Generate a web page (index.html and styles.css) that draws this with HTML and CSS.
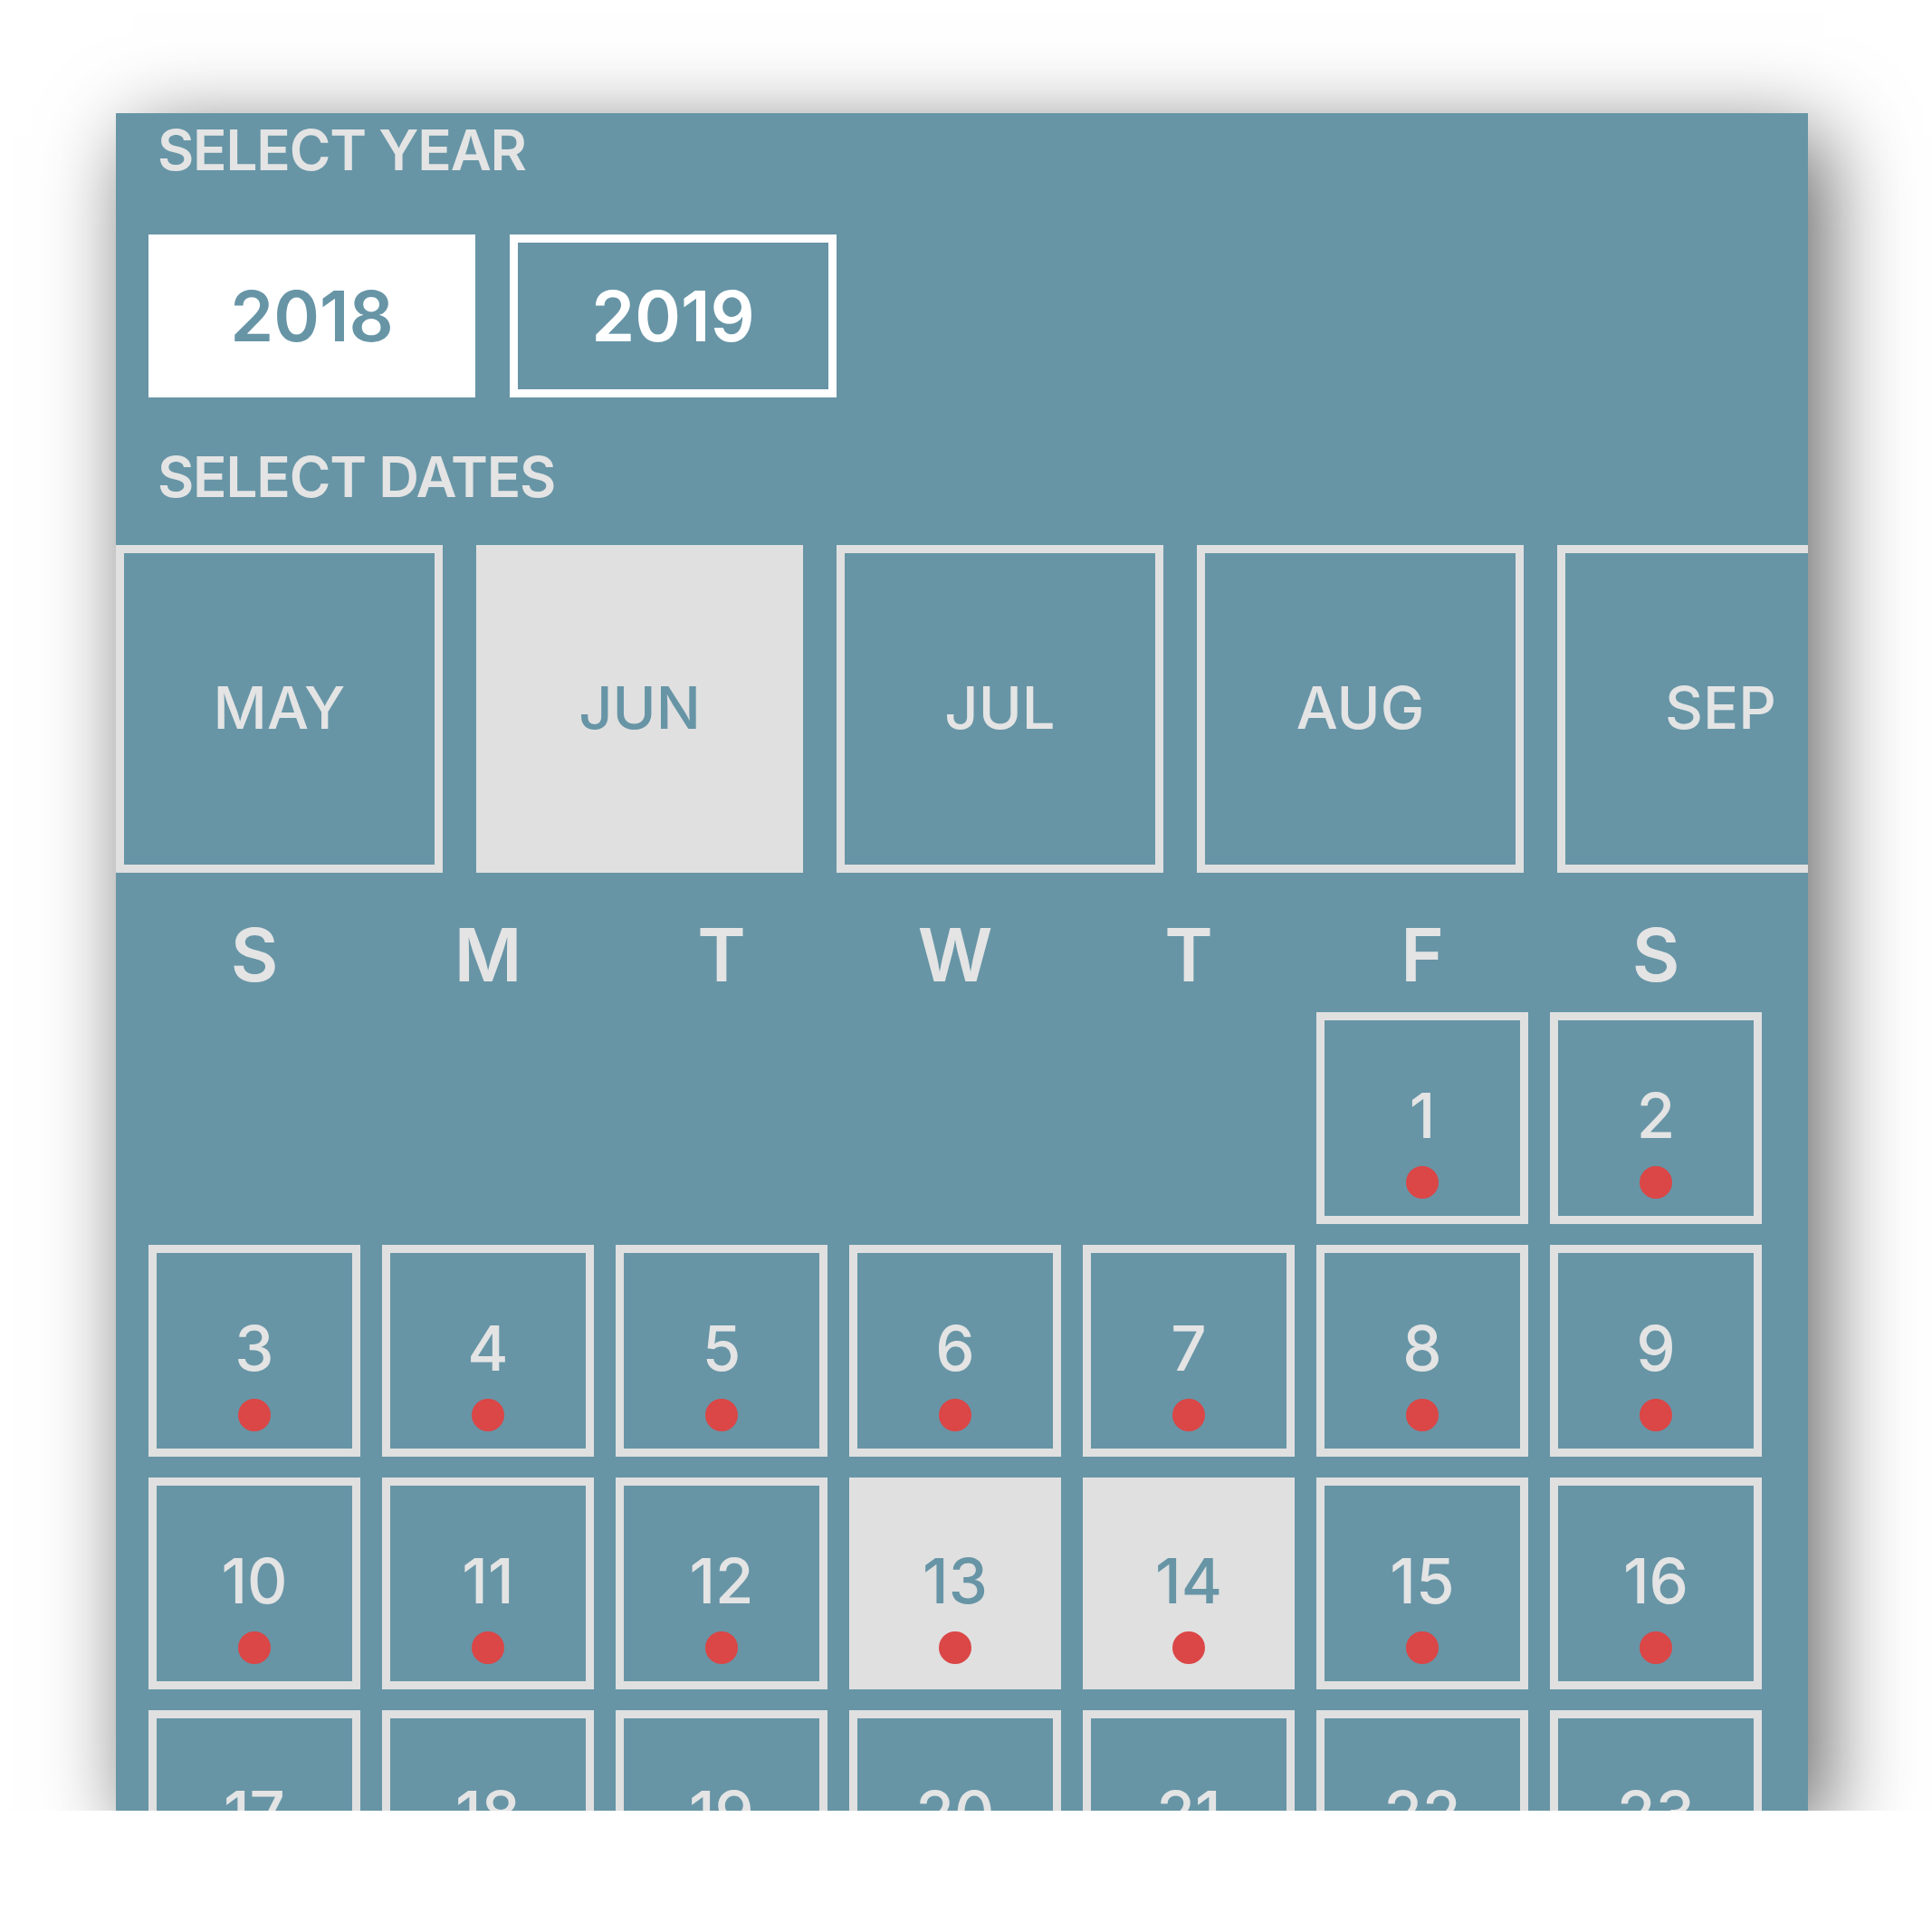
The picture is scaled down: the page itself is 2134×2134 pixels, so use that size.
FILE: index.html
```html
<!DOCTYPE html>
<html lang="en">
<head>
    <meta charset="UTF-8">
    <meta name="viewport" content="width=device-width, initial-scale=1.0">
    <title>Select Dates</title>
    <link rel="stylesheet" href="styles.css">
</head>
<body>

<div class="panel">
    <!-- Year picker -->
    <h3 class="label">SELECT YEAR</h3>
    <div class="years">
        <div class="year selected">2018</div>
        <div class="year">2019</div>
    </div>

    <!-- Month strip -->
    <h3 class="label dates-label">SELECT DATES</h3>
    <div class="months">
        <div class="month">MAY</div>
        <div class="month selected">JUN</div>
        <div class="month">JUL</div>
        <div class="month">AUG</div>
        <div class="month">SEP</div>
    </div>

    <!-- Day grid -->
    <div class="weekdays">
        <span>S</span><span>M</span><span>T</span><span>W</span><span>T</span><span>F</span><span>S</span>
    </div>
    <div class="days" id="days"></div>
</div>

<script>
    // June 2018 starts on a Friday
    var firstWeekday = 5;
    var totalDays = 30;
    var picked = [13, 14];
    var grid = document.getElementById("days");

    for (var i = 0; i < firstWeekday; i++) {
        grid.appendChild(document.createElement("div"));
    }
    for (var d = 1; d <= totalDays; d++) {
        var cell = document.createElement("div");
        cell.className = picked.indexOf(d) >= 0 ? "day selected" : "day";
        cell.innerHTML = '<span class="num">' + d + '</span><span class="dot"></span>';
        grid.appendChild(cell);
    }
</script>

</body>
</html>
```
FILE: styles.css
```css
body {
    margin: 0;
    padding: 125px 0 0 128px;
    background-color: #fff;
    font-family: Inter, "Liberation Sans", sans-serif;
}
.panel {
    width: 1869px;
    height: 1875px;
    overflow: hidden;
    background-color: #6795a6;
    box-shadow: 18px 24px 90px rgba(0, 0, 0, 0.62);
}
.label {
    margin: 0;
    padding: 10px 0 0 46px;
    font-size: 62px;
    line-height: 1;
    font-weight: 600;
    letter-spacing: -1.2px;
    color: #e4e4e4;
}
.years {
    display: flex;
    gap: 38px;
    margin: 62px 0 0 36px;
}
.year {
    box-sizing: border-box;
    width: 361px;
    height: 180px;
    display: flex;
    justify-content: center;
    align-items: center;
    font-size: 77px;
    font-weight: 600;
    color: #fff;
    border: 9px solid #fff;
}
.year.selected {
    background-color: #fff;
    color: #6795a6;
}
.dates-label {
    padding-top: 57px;
}
.months {
    display: flex;
    gap: 37px;
    margin-top: 44px;
}
.month {
    flex: 0 0 361px;
    box-sizing: border-box;
    height: 362px;
    padding-bottom: 4px;
    display: flex;
    justify-content: center;
    align-items: center;
    font-size: 65px;
    font-weight: 500;
    color: #e4e4e4;
    border: 9px solid #e0e0e0;
}
.month.selected {
    background-color: #e0e0e0;
    color: #6795a6;
}
.weekdays, .days {
    display: grid;
    grid-template-columns: repeat(7, 234px);
    column-gap: 24px;
    margin-left: 36px;
}
.weekdays {
    margin-top: 51px;
    font-size: 81px;
    line-height: 1;
    font-weight: 600;
    color: #e4e4e4;
    text-align: center;
}
.days {
    row-gap: 23px;
    margin-top: 22px;
}
.day {
    box-sizing: border-box;
    height: 234px;
    padding-top: 71px;
    display: flex;
    flex-direction: column;
    align-items: center;
    border: 9px solid #e0e0e0;
    color: #e4e4e4;
}
.day.selected {
    background-color: #e0e0e0;
    color: #6795a6;
}
.num {
    font-size: 69px;
    line-height: 1;
    font-weight: 500;
}
.dot {
    width: 36px;
    height: 36px;
    margin-top: 21px;
    border-radius: 50%;
    background-color: #db4646;
}
```
